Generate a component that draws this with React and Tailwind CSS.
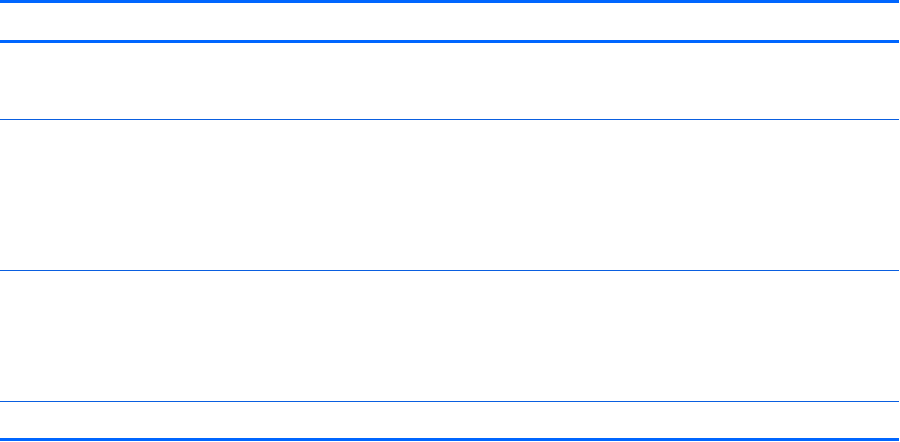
export default function App() {
  return (
    <div className="w-[900px] h-[442px] bg-white">
      <div className="w-[899px] flex flex-col">
        <div className="h-[3px] bg-[#0066ff]" />
        <div className="h-[37px]" />
        <div className="h-[3px] bg-[#0066ff]" />
        <div className="h-[76px]" />
        <div className="h-px bg-[#0a5fe0]" />
        <div className="h-[150px]" />
        <div className="h-px bg-[#0a5fe0]" />
        <div className="h-[130px]" />
        <div className="h-px bg-[#0a5fe0]" />
        <div className="h-[36px]" />
        <div className="h-[3px] bg-[#0066ff]" />
      </div>
    </div>
  );
}
